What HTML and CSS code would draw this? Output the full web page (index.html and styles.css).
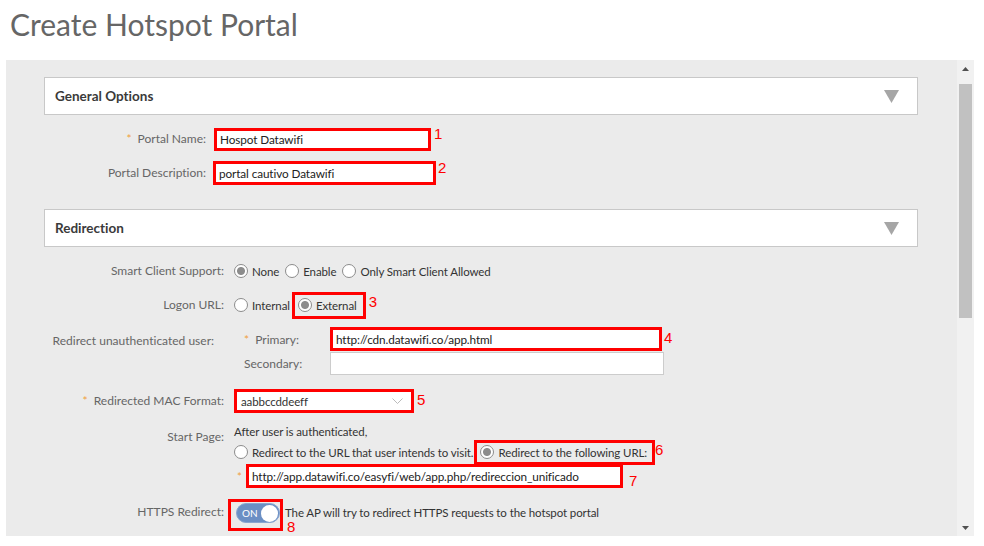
FILE: index.html
```html
<!DOCTYPE html>
<html lang="en">
<head>
    <meta charset="UTF-8">
    <title>Create Hotspot Portal</title>
    <link rel="stylesheet" href="styles.css">
</head>
<body>
    <h1 class="page-title">Create Hotspot Portal</h1>

    <div class="panel">
        <div class="panel-body">
            <!-- General Options -->
            <div class="section section-general">
                <div class="section-header">
                    <span>General Options</span>
                    <svg class="caret" width="15" height="13" viewBox="0 0 15 13"><polygon points="0,0 15,0 7.5,13" fill="#a6a6a6"/></svg>
                </div>
                <div class="form-row first">
                    <label class="label"><span class="req">*</span> Portal Name:</label>
                    <span class="mark mark-name">
                        <input class="text-input" type="text" value="Hospot Datawifi">
                        <span class="num num-1">1</span>
                    </span>
                </div>
                <div class="form-row">
                    <label class="label">Portal Description:</label>
                    <span class="mark mark-desc">
                        <input class="text-input" type="text" value="portal cautivo Datawifi">
                        <span class="num num-2">2</span>
                    </span>
                </div>
            </div>

            <!-- Redirection -->
            <div class="section section-redirect">
                <div class="section-header">
                    <span>Redirection</span>
                    <svg class="caret" width="15" height="13" viewBox="0 0 15 13"><polygon points="0,0 15,0 7.5,13" fill="#a6a6a6"/></svg>
                </div>
                <div class="form-row first">
                    <label class="label">Smart Client Support:</label>
                    <div class="options">
                        <label class="radio-opt"><input type="radio" name="smart" checked> None</label>
                        <label class="radio-opt"><input type="radio" name="smart"> Enable</label>
                        <label class="radio-opt"><input type="radio" name="smart"> Only Smart Client Allowed</label>
                    </div>
                </div>
                <div class="form-row">
                    <label class="label">Logon URL:</label>
                    <div class="options">
                        <label class="radio-opt"><input type="radio" name="logon"> Internal</label>
                        <span class="mark mark-external">
                            <label class="radio-opt"><input type="radio" name="logon" checked> External</label>
                            <span class="num num-3">3</span>
                        </span>
                    </div>
                </div>
                <div class="form-row tall">
                    <label class="label label-wide">Redirect unauthenticated user:</label>
                    <div class="sub-grid">
                        <div class="sub-line">
                            <span class="sub-label"><span class="req">*</span> Primary:</span>
                            <span class="mark mark-primary">
                                <input class="text-input" type="text" value="http://cdn.datawifi.co/app.html">
                                <span class="num num-4">4</span>
                            </span>
                        </div>
                        <div class="sub-line">
                            <span class="sub-label">Secondary:</span>
                            <input class="text-input secondary" type="text" value="">
                        </div>
                    </div>
                </div>
                <div class="form-row mac-row">
                    <label class="label"><span class="req">*</span> Redirected MAC Format:</label>
                    <span class="mark mark-mac">
                        <div class="select">
                            <span>aabbccddeeff</span>
                            <svg width="11" height="6" viewBox="0 0 11 6"><polyline points="0.5,0.5 5.5,5.5 10.5,0.5" fill="none" stroke="#bbb" stroke-width="1"/></svg>
                        </div>
                        <span class="num num-5">5</span>
                    </span>
                </div>
                <div class="form-row tall">
                    <label class="label label-start">Start Page:</label>
                    <div class="start-page">
                        <div class="start-line">After user is authenticated,</div>
                        <div class="radio-line">
                            <label class="radio-opt"><input type="radio" name="start"> Redirect to the URL that user intends to visit.</label>
                            <span class="mark mark-following">
                                <label class="radio-opt"><input type="radio" name="start" checked> Redirect to the following URL:</label>
                                <span class="num num-6">6</span>
                            </span>
                        </div>
                        <div class="url-line">
                            <span class="req star">*</span>
                            <span class="mark mark-url">
                                <input class="text-input" type="text" value="http://app.datawifi.co/easyfi/web/app.php/redireccion_unificado">
                                <span class="num num-7">7</span>
                            </span>
                        </div>
                    </div>
                </div>
                <div class="form-row https-row">
                    <label class="label">HTTPS Redirect:</label>
                    <span class="mark mark-toggle">
                        <span class="toggle"><span class="toggle-text">ON</span><span class="knob"></span></span>
                        <span class="num num-8">8</span>
                    </span>
                    <span class="hint">The AP will try to redirect HTTPS requests to the hotspot portal</span>
                </div>
            </div>
        </div>

        <div class="scrollbar">
            <div class="scroll-btn"><svg width="7" height="4" viewBox="0 0 7 4"><polygon points="0,4 7,4 3.5,0" fill="#505050"/></svg></div>
            <div class="scroll-thumb"></div>
            <div class="scroll-space"></div>
            <div class="scroll-btn"><svg width="7" height="4" viewBox="0 0 7 4"><polygon points="0,0 7,0 3.5,4" fill="#505050"/></svg></div>
        </div>
    </div>
</body>
</html>
```

FILE: styles.css
```css
* {
    box-sizing: border-box;
}

body {
    margin: 0;
    font-family: Lato, "Open Sans", sans-serif;
    font-size: 11.5px;
    letter-spacing: -0.1px;
    font-variant-ligatures: none;
    color: #333;
    background: #fff;
}

.page-title {
    margin: 0;
    height: 60px;
    padding: 4px 0 0 10px;
    font-size: 30px;
    line-height: 40px;
    font-weight: 400;
    letter-spacing: 0;
    color: #666;
}

.panel {
    margin: 0 10px 0 6px;
    height: 476px;
    background: #ebebeb;
    display: flex;
    overflow: hidden;
}

.panel-body {
    flex: 1;
    padding: 17px 39px 0 38px;
}

/* sections */
.section-header {
    height: 38px;
    background: #fff;
    border: 1px solid #c8c8c8;
    display: flex;
    align-items: center;
    justify-content: space-between;
    padding: 0 18px 0 10px;
    font-size: 13.5px;
    font-weight: 700;
    letter-spacing: 0;
    color: #3a3a3a;
}

.section-general {
    margin-bottom: 24px;
}

.form-row {
    display: flex;
    align-items: center;
    height: 24px;
    margin-top: 10px;
}

.form-row.first {
    margin-top: 12px;
}

.form-row.tall {
    height: auto;
    align-items: flex-start;
}

.label {
    flex: none;
    text-align: right;
    font-size: 12px;
    letter-spacing: 0;
    color: #666;
    line-height: 24px;
}

.section-general .label {
    width: 162px;
    margin-right: 8px;
}

.section-redirect .label {
    width: 180px;
    margin-right: 10px;
}

.section-redirect .label-wide {
    padding-right: 10px;
    padding-top: 2px;
}

.section-redirect .label-start {
    padding-top: 2px;
}

.req {
    color: #f0a040;
    margin-right: 3px;
}

/* inputs */
.text-input {
    font-family: inherit;
    font-size: 11.75px;
    letter-spacing: -0.1px;
    font-variant-ligatures: none;
    color: #222;
    background: #fff;
    border: 1px solid #ccc;
    padding: 0 3px;
    height: 22px;
    outline: none;
}

.mark {
    position: relative;
    display: inline-flex;
    align-items: center;
    border: 3px solid #f00;
}

.mark .text-input {
    border: none;
}

.mark-name .text-input { width: 211px; height: 17px; }
.mark-desc { margin-left: -1px; }
.mark-desc .text-input { width: 217px; height: 18px; }
.mark-primary .text-input { width: 326px; height: 18px; }
.mark-url .text-input { width: 371px; height: 18px; }

.text-input.secondary {
    width: 334px;
    height: 23px;
}

/* red annotation numbers */
.num {
    position: absolute;
    font-family: "Liberation Sans", sans-serif;
    font-size: 15px;
    line-height: 12px;
    letter-spacing: 0;
    color: #f00;
}

.num-1 { left: calc(100% + 6px); top: -3px; }
.num-2 { left: calc(100% + 5px); top: -2px; }
.num-3 { left: calc(100% + 6px); top: 1px; }
.num-4 { left: calc(100% + 5px); top: 2px; }
.num-5 { left: calc(100% + 6px); top: 2px; }
.num-6 { left: calc(100% + 3px); top: 1px; }
.num-7 { left: calc(100% + 9px); top: 8px; }
.num-8 { left: calc(100% + 7px); top: 19px; }

/* radios */
.options {
    display: flex;
    align-items: center;
}

.radio-opt {
    display: inline-flex;
    align-items: center;
    color: #333;
    margin-right: 6px;
    white-space: nowrap;
}

.radio-opt input {
    appearance: none;
    -webkit-appearance: none;
    width: 14px;
    height: 14px;
    margin: 0 4px 0 0;
    border: 1px solid #8c8c8c;
    border-radius: 50%;
    background: #fff;
}

.radio-opt input:checked {
    background: radial-gradient(circle, #8c8c8c 0, #8c8c8c 3.5px, #fff 4.5px);
}

.mark-external {
    margin-left: -4px;
    height: 27px;
    padding: 0 3px;
}

.mark-external .radio-opt {
    margin-right: 3px;
}

/* redirect unauthenticated user */
.sub-grid {
    display: flex;
    flex-direction: column;
}

.sub-line {
    display: flex;
    align-items: center;
    height: 24px;
}

.sub-label {
    width: 96px;
    padding-left: 10px;
    font-size: 12px;
    letter-spacing: 0;
    color: #666;
}

/* mac select */
.mac-row {
    margin-top: 14px;
}

.select {
    width: 174px;
    height: 18px;
    background: #fff;
    display: flex;
    align-items: center;
    justify-content: space-between;
    padding: 0 8px 0 4px;
    color: #333;
}

/* start page */
.start-page {
    display: flex;
    flex-direction: column;
}

.start-line {
    height: 18px;
    line-height: 18px;
    color: #333;
}

.radio-line {
    display: flex;
    align-items: center;
    height: 22px;
}

.radio-line .radio-opt {
    margin-right: 1px;
}

.mark-following {
    height: 25px;
    padding: 0 5px 0 3px;
}

.mark-following .radio-opt {
    margin-right: 0;
}

.url-line {
    display: flex;
    align-items: center;
    margin-top: 1px;
}

.star {
    width: 12px;
    padding-left: 3px;
    margin: 0;
}

/* https toggle */
.https-row {
    height: 32px;
    margin-top: 11px;
}

.https-row .label {
    margin-bottom: 6px;
}

.mark-toggle {
    margin-left: -6px;
    width: 55px;
    height: 32px;
    padding: 0 0 4px 5px;
}

.toggle {
    display: flex;
    align-items: center;
    justify-content: space-between;
    width: 44px;
    height: 20px;
    border-radius: 10px;
    background: #6b8fc4;
    border: 1px solid #8aa6d0;
    padding: 0 1px 0 5px;
}

.toggle-text {
    color: #fff;
    font-size: 10px;
    letter-spacing: 0;
}

.knob {
    width: 17px;
    height: 17px;
    border-radius: 50%;
    background: #fff;
}

.hint {
    margin: 0 0 4px 2px;
    line-height: 14px;
    color: #333;
}

/* fake scrollbar */
.scrollbar {
    width: 17px;
    flex: none;
    background: #f1f1f1;
    display: flex;
    flex-direction: column;
    align-items: center;
}

.scroll-btn {
    height: 17px;
    flex: none;
    display: flex;
    align-items: center;
    justify-content: center;
}

.scroll-thumb {
    width: 13px;
    height: 234px;
    margin-top: 7px;
    background: #c1c1c1;
}

.scroll-space {
    flex: 1;
}
```
